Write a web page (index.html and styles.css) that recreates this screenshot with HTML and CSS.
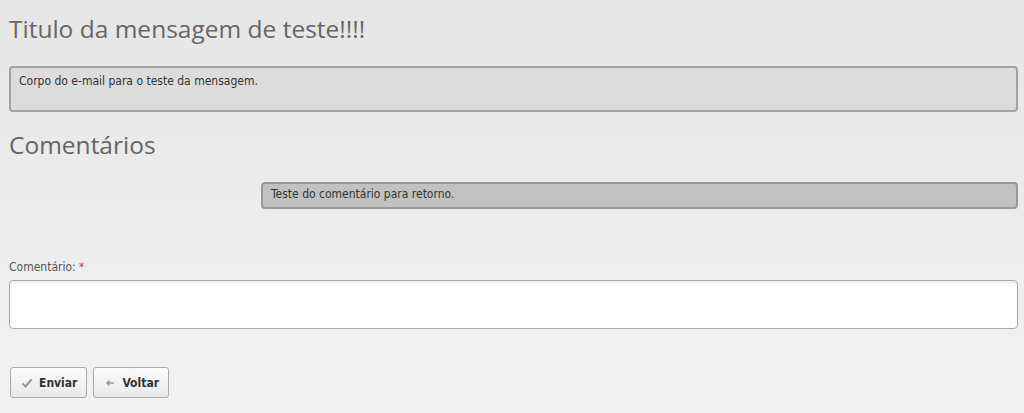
FILE: index.html
```html
<!DOCTYPE html>
<html lang="pt">
<head>
  <meta charset="UTF-8" />
  <title>Mensagem</title>
  <link rel="stylesheet" href="styles.css">
</head>
<body>
  <div class="page">
    <h1 class="title">Titulo da mensagem de teste!!!!</h1>
    <div class="message">Corpo do e-mail para o teste da mensagem.</div>

    <h2 class="title">Comentários</h2>
    <div class="comments">
      <div class="comment">Teste do comentário para retorno.</div>
    </div>

    <form class="form">
      <label class="label" for="comentario">Comentário: <span class="req">*</span></label>
      <textarea id="comentario" class="input" autofocus></textarea>

      <div class="actions">
        <button type="button" class="btn">
          <svg width="12" height="12" viewBox="0 0 12 12"><path d="M1.5 6.5 L4.5 9.5 L10.5 2.5" fill="none" stroke="#999" stroke-width="2"/></svg>
          Enviar
        </button>
        <button type="button" class="btn">
          <svg width="12" height="12" viewBox="0 0 12 12"><path d="M10 6 H3 M5.5 3.5 L3 6 L5.5 8.5" fill="none" stroke="#999" stroke-width="1.5"/></svg>
          Voltar
        </button>
      </div>
    </form>
  </div>
</body>
</html>
```

FILE: styles.css
```css
html {
  height: 100%;
}
body {
  margin: 0;
  min-height: 100%;
  background: linear-gradient(#e6e6e6, #f2f2f2);
  font-family: "DejaVu Sans Condensed", "DejaVu Sans", sans-serif;
  font-size: 12px;
  color: #333;
}
.page {
  padding: 13px 6px 0 9px;
}
.title {
  margin: 0;
  font-family: "Open Sans", sans-serif;
  font-weight: normal;
  font-size: 24.5px;
  line-height: 32px;
  color: #666;
}
.message {
  margin-top: 21px;
  height: 28px;
  padding: 6px 8px 8px 8px;
  background: #dcdcdc;
  border: 2px solid #a3a3a3;
  border-radius: 4px;
}
h2.title {
  margin-top: 17px;
}
.comments {
  display: flex;
  justify-content: flex-end;
  margin-top: 21px;
}
.comment {
  width: 737px;
  height: 17px;
  padding: 3px 8px 3px 8px;
  background: #c1c1c1;
  border: 2px solid #999;
  border-radius: 4px;
}
.form {
  margin-top: 51px;
}
.label {
  display: block;
  color: #555;
  margin-bottom: 6px;
}
.req {
  color: #e33;
}
.input {
  display: block;
  box-sizing: border-box;
  width: 1009px;
  height: 49px;
  padding: 6px 8px;
  border: 1px solid #aaa;
  border-radius: 4px;
  background: #fff;
  box-shadow: inset 0 2px 3px rgba(0,0,0,0.08);
  resize: none;
  font-family: inherit;
  font-size: 12px;
  outline: none;
}
.actions {
  display: flex;
  gap: 6px;
  margin-top: 38px;
  padding-left: 1px;
}
.btn {
  display: flex;
  align-items: center;
  gap: 6px;
  height: 31px;
  padding: 0 9px 0 10px;
  border: 1px solid #aaa;
  border-radius: 3px;
  background: linear-gradient(#fbfbfb, #e9e9e9);
  font-family: "DejaVu Sans Condensed", "DejaVu Sans", sans-serif;
  font-weight: bold;
  font-size: 12px;
  color: #333;
}
```
